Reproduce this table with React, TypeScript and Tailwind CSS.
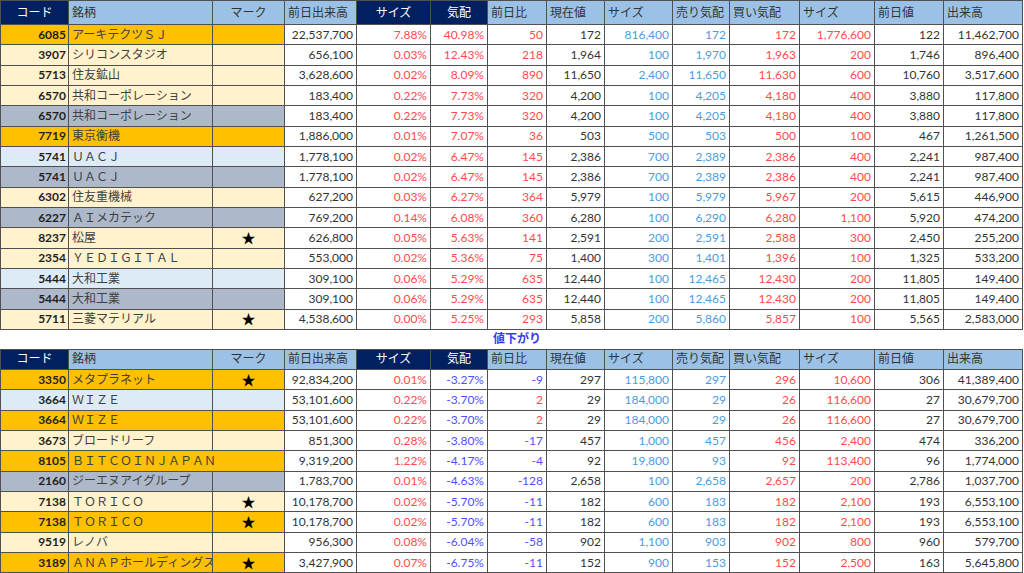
import React from "react";

type Row = {
    code: string;
    name: string;
    star?: boolean;
    bg: "G" | "Y" | "S" | "B";
    span?: boolean;
    v: string[];
};

const bgClass = {
    G: "bg-[#ffc000]",
    Y: "bg-[#fff2cc]",
    S: "bg-[#adb9ca]",
    B: "bg-[#ddebf7]",
};

// colours of the value columns, left to right
const colTone = ["dark", "red", "sign", "sign", "dark", "sky", "sky", "red", "red", "dark", "dark"];

const toneClass = (tone: string, value: string) => {
    if (tone === "red") return "text-[#ff4b4b]";
    if (tone === "sky") return "text-[#4a9ce0]";
    if (tone === "sign") return value.startsWith("-") ? "text-[#4f4fff]" : "text-[#ff4b4b]";
    return "text-[#333333]";
};

const widths = [68, 144, 72, 72, 74, 57, 59, 58, 68, 57, 70, 75, 69, 79];

const risers: Row[] = [
    { code: "6085", name: "アーキテクツＳＪ", bg: "G", v: ["22,537,700", "7.88%", "40.98%", "50", "172", "816,400", "172", "172", "1,776,600", "122", "11,462,700"] },
    { code: "3907", name: "シリコンスタジオ", bg: "Y", v: ["656,100", "0.03%", "12.43%", "218", "1,964", "100", "1,970", "1,963", "200", "1,746", "896,400"] },
    { code: "5713", name: "住友鉱山", bg: "Y", v: ["3,628,600", "0.02%", "8.09%", "890", "11,650", "2,400", "11,650", "11,630", "600", "10,760", "3,517,600"] },
    { code: "6570", name: "共和コーポレーション", bg: "Y", v: ["183,400", "0.22%", "7.73%", "320", "4,200", "100", "4,205", "4,180", "400", "3,880", "117,800"] },
    { code: "6570", name: "共和コーポレーション", bg: "S", v: ["183,400", "0.22%", "7.73%", "320", "4,200", "100", "4,205", "4,180", "400", "3,880", "117,800"] },
    { code: "7719", name: "東京衡機", bg: "G", v: ["1,886,000", "0.01%", "7.07%", "36", "503", "500", "503", "500", "100", "467", "1,261,500"] },
    { code: "5741", name: "ＵＡＣＪ", bg: "B", v: ["1,778,100", "0.02%", "6.47%", "145", "2,386", "700", "2,389", "2,386", "400", "2,241", "987,400"] },
    { code: "5741", name: "ＵＡＣＪ", bg: "S", v: ["1,778,100", "0.02%", "6.47%", "145", "2,386", "700", "2,389", "2,386", "400", "2,241", "987,400"] },
    { code: "6302", name: "住友重機械", bg: "Y", v: ["627,200", "0.03%", "6.27%", "364", "5,979", "100", "5,979", "5,967", "200", "5,615", "446,900"] },
    { code: "6227", name: "ＡＩメカテック", bg: "S", v: ["769,200", "0.14%", "6.08%", "360", "6,280", "100", "6,290", "6,280", "1,100", "5,920", "474,200"] },
    { code: "8237", name: "松屋", star: true, bg: "Y", v: ["626,800", "0.05%", "5.63%", "141", "2,591", "200", "2,591", "2,588", "300", "2,450", "255,200"] },
    { code: "2354", name: "ＹＥＤＩＧＩＴＡＬ", bg: "Y", v: ["553,000", "0.02%", "5.36%", "75", "1,400", "300", "1,401", "1,396", "100", "1,325", "533,200"] },
    { code: "5444", name: "大和工業", bg: "B", v: ["309,100", "0.06%", "5.29%", "635", "12,440", "100", "12,465", "12,430", "200", "11,805", "149,400"] },
    { code: "5444", name: "大和工業", bg: "S", v: ["309,100", "0.06%", "5.29%", "635", "12,440", "100", "12,465", "12,430", "200", "11,805", "149,400"] },
    { code: "5711", name: "三菱マテリアル", star: true, bg: "Y", v: ["4,538,600", "0.00%", "5.25%", "293", "5,858", "200", "5,860", "5,857", "100", "5,565", "2,583,000"] },
];

const fallers: Row[] = [
    { code: "3350", name: "メタプラネット", star: true, bg: "G", v: ["92,834,200", "0.01%", "-3.27%", "-9", "297", "115,800", "297", "296", "10,600", "306", "41,389,400"] },
    { code: "3664", name: "ＷＩＺＥ", bg: "B", v: ["53,101,600", "0.22%", "-3.70%", "2", "29", "184,000", "29", "26", "116,600", "27", "30,679,700"] },
    { code: "3664", name: "ＷＩＺＥ", bg: "G", v: ["53,101,600", "0.22%", "-3.70%", "2", "29", "184,000", "29", "26", "116,600", "27", "30,679,700"] },
    { code: "3673", name: "ブロードリーフ", bg: "Y", v: ["851,300", "0.28%", "-3.80%", "-17", "457", "1,000", "457", "456", "2,400", "474", "336,200"] },
    { code: "8105", name: "ＢＩＴＣＯＩＮＪＡＰＡＮ", bg: "G", span: true, v: ["9,319,200", "1.22%", "-4.17%", "-4", "92", "19,800", "93", "92", "113,400", "96", "1,774,000"] },
    { code: "2160", name: "ジーエヌアイグループ", bg: "S", v: ["1,783,700", "0.01%", "-4.63%", "-128", "2,658", "100", "2,658", "2,657", "200", "2,786", "1,037,700"] },
    { code: "7138", name: "ＴＯＲＩＣＯ", star: true, bg: "Y", v: ["10,178,700", "0.02%", "-5.70%", "-11", "182", "600", "183", "182", "2,100", "193", "6,553,100"] },
    { code: "7138", name: "ＴＯＲＩＣＯ", star: true, bg: "G", v: ["10,178,700", "0.02%", "-5.70%", "-11", "182", "600", "183", "182", "2,100", "193", "6,553,100"] },
    { code: "9519", name: "レノバ", bg: "Y", v: ["956,300", "0.08%", "-6.04%", "-58", "902", "1,100", "903", "902", "800", "960", "579,700"] },
    { code: "3189", name: "ＡＮＡＰホールディングス", star: true, bg: "G", v: ["3,427,900", "0.07%", "-6.75%", "-11", "152", "900", "153", "152", "2,500", "163", "5,645,800"] },
];

const cell = "border border-[#505050] overflow-hidden whitespace-nowrap p-0";

function HeaderRow({ tall }: { tall?: boolean }) {
    const navy = `${cell} bg-[#002060] text-white text-center`;
    const light = `${cell} bg-[#9bc2e6] text-[#333333] text-left pl-[3px]`;
    const h = tall ? "h-[24px]" : "h-[20px]";
    return (
        <tr className={h}>
            <td className={navy}>コード</td>
            <td className={light}>銘柄</td>
            <td className={`${cell} bg-[#9bc2e6] text-[#333333] text-center`}>マーク</td>
            <td className={light}>前日出来高</td>
            <td className={navy}>サイズ</td>
            <td className={navy}>気配</td>
            <td className={light}>前日比</td>
            <td className={light}>現在値</td>
            <td className={light}>サイズ</td>
            <td className={light}>売り気配</td>
            <td className={light}>買い気配</td>
            <td className={light}>サイズ</td>
            <td className={light}>前日値</td>
            <td className={light}>出来高</td>
        </tr>
    );
}

function DataRow({ row }: { row: Row }) {
    const bg = bgClass[row.bg];
    return (
        <tr className="h-[20.33px]">
            <td className={`${cell} ${bg} text-right pr-[2px] font-bold text-[#1f1f1f]`}>{row.code}</td>
            <td
                colSpan={row.span ? 2 : 1}
                className={`${cell} ${bg} text-left pl-[3px] text-[#404040]`}
            >
                {row.name}
            </td>
            {!row.span && (
                <td className={`${cell} ${bg} text-center text-black text-[14px]`}>{row.star ? "★" : ""}</td>
            )}
            {row.v.map((value, i) => (
                <td
                    key={i}
                    className={`${cell} bg-white text-right pr-[3px] ${toneClass(colTone[i], value)}`}
                >
                    {value}
                </td>
            ))}
        </tr>
    );
}

export default function App() {
    return (
        <div
            className="w-[1024px] h-[573px] overflow-hidden bg-white text-[12px] leading-none"
            style={{ fontFamily: 'Lato, "Noto Sans CJK JP", sans-serif' }}
        >
            <table className="table-fixed border-collapse w-[1022px]">
                <colgroup>
                    {widths.map((w, i) => (
                        <col key={i} style={{ width: w }} />
                    ))}
                </colgroup>
                <tbody>
                    <HeaderRow tall />
                    {risers.map((row, i) => (
                        <DataRow key={`r${i}`} row={row} />
                    ))}

                    {/* label between the two blocks */}
                    <tr className="h-[20px]">
                        <td colSpan={6} className="p-0" />
                        <td className="p-0 text-center font-bold text-[#3b3bf5] whitespace-nowrap">値下がり</td>
                        <td colSpan={7} className="p-0" />
                    </tr>

                    <HeaderRow />
                    {fallers.map((row, i) => (
                        <DataRow key={`f${i}`} row={row} />
                    ))}
                </tbody>
            </table>
        </div>
    );
}
